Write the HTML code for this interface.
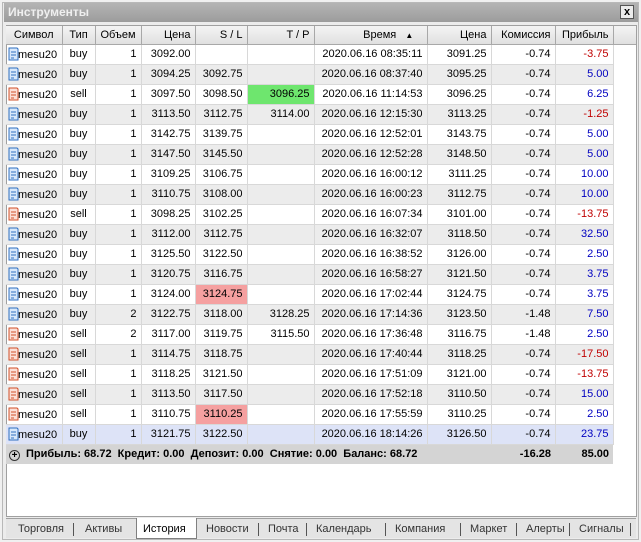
<!DOCTYPE html>
<html><head><meta charset="utf-8">
<style>
*{margin:0;padding:0;box-sizing:border-box}
body{width:641px;height:542px;background:#f0f0f0;font-family:"Liberation Sans",sans-serif;font-size:11px;color:#000;position:relative;overflow:hidden}
.frame{position:absolute;left:2px;top:2px;width:637px;height:538px;border:1px solid #b8b8b8;background:#ececec}
.title{position:absolute;left:4px;top:3px;width:634px;height:19px;background:linear-gradient(#b4b4b4,#9c9c9c);color:#efefef;font-weight:bold;font-size:12px;line-height:19px;padding-left:4px}
.close{position:absolute;right:4px;top:2px;width:14px;height:14px;background:#ececec;border:1px solid #555;color:#000;font-size:11px;line-height:12px;text-align:center;font-weight:bold}
.area{position:absolute;left:6px;top:25px;width:631px;height:492px;background:#fff;border:1px solid #a0a0a0}
table{position:absolute;left:6px;top:26px;border-collapse:collapse;table-layout:fixed;width:630px}
td,th{height:20px;padding:0 4px;white-space:nowrap;overflow:hidden;border-right:1px solid #d8d8d8;border-bottom:1px solid #d8d8d8;text-align:right;font-weight:normal}
th{height:18px;background:linear-gradient(#f4f4f4,#e0e0e0);border-right:1px solid #a8a8a8;border-bottom:1px solid #a8a8a8;text-align:right}
tr.e td{background:#ececec}
tr.s td{background:#dde3f7}
td.c,th.c{text-align:center}
td.sym{text-align:left;padding:0 0 0 2px}
.r{color:#c00000}.b{color:#0000c0}
.g{background:#6ee66e!important}.p{background:#f5a0a0!important}
tr.t td{background:#d4d4d4;font-weight:bold;border:none;height:20px}
svg{vertical-align:-3px;margin-right:-1px}
.tabs{position:absolute;left:6px;top:518px;width:630px;height:20px;background:#e4e4e4;border-top:1px solid #a0a0a0;font-size:11px;color:#333}
.tabs span{position:absolute;top:4px;line-height:12px}
.tabs i{position:absolute;top:4px;width:1px;height:13px;background:#555}
.tabs .a{position:absolute;left:130px;top:-1px;width:61px;height:21px;background:#fff;border:1px solid #808080;border-top:none}
</style></head><body>
<div class="frame"></div>
<div class="title">Инструменты<div class="close">x</div></div>
<div class="area"></div>
<svg width="0" height="0" style="position:absolute"><defs>
<symbol id="bi" viewBox="0 0 11 14"><path d="M1 1h8l1 1v11H1z" fill="#d8e8fa" stroke="#2f6fc0"/><path d="M3 5h5M3 8h5M3 11h3" stroke="#2f6fc0"/></symbol>
<symbol id="si" viewBox="0 0 11 14"><path d="M1 1h8l1 1v11H1z" fill="#fbe0d8" stroke="#d0502a"/><path d="M3 5h5M3 8h5M3 11h3" stroke="#d0502a"/></symbol>
</defs></svg>
<table>
<colgroup><col style="width:56px"><col style="width:33px"><col style="width:46px"><col style="width:54px"><col style="width:52px"><col style="width:67px"><col style="width:113px"><col style="width:64px"><col style="width:64px"><col style="width:58px"><col style="width:23px"></colgroup>
<tr><th class="c">Символ</th><th class="c">Тип</th><th class="c">Объем</th><th>Цена</th><th>S / L</th><th>T / P</th><th>Время &nbsp;&nbsp;<span style="font-size:8px">&#9650;</span>&nbsp;&nbsp;&nbsp;</th><th>Цена</th><th>Комиссия</th><th>Прибыль</th><th style="border-right:none"></th></tr>
<tr><td class="sym"><svg width="11" height="14"><use href="#bi"/></svg>mesu20</td><td class="c">buy</td><td>1</td><td>3092.00</td><td></td><td></td><td>2020.06.16 08:35:11</td><td>3091.25</td><td>-0.74</td><td class="r">-3.75</td><td style="border:none"></td></tr>
<tr class="e"><td class="sym"><svg width="11" height="14"><use href="#bi"/></svg>mesu20</td><td class="c">buy</td><td>1</td><td>3094.25</td><td>3092.75</td><td></td><td>2020.06.16 08:37:40</td><td>3095.25</td><td>-0.74</td><td class="b">5.00</td><td style="border:none;background:#fff"></td></tr>
<tr><td class="sym"><svg width="11" height="14"><use href="#si"/></svg>mesu20</td><td class="c">sell</td><td>1</td><td>3097.50</td><td>3098.50</td><td class="g">3096.25</td><td>2020.06.16 11:14:53</td><td>3096.25</td><td>-0.74</td><td class="b">6.25</td><td style="border:none"></td></tr>
<tr class="e"><td class="sym"><svg width="11" height="14"><use href="#bi"/></svg>mesu20</td><td class="c">buy</td><td>1</td><td>3113.50</td><td>3112.75</td><td>3114.00</td><td>2020.06.16 12:15:30</td><td>3113.25</td><td>-0.74</td><td class="r">-1.25</td><td style="border:none;background:#fff"></td></tr>
<tr><td class="sym"><svg width="11" height="14"><use href="#bi"/></svg>mesu20</td><td class="c">buy</td><td>1</td><td>3142.75</td><td>3139.75</td><td></td><td>2020.06.16 12:52:01</td><td>3143.75</td><td>-0.74</td><td class="b">5.00</td><td style="border:none"></td></tr>
<tr class="e"><td class="sym"><svg width="11" height="14"><use href="#bi"/></svg>mesu20</td><td class="c">buy</td><td>1</td><td>3147.50</td><td>3145.50</td><td></td><td>2020.06.16 12:52:28</td><td>3148.50</td><td>-0.74</td><td class="b">5.00</td><td style="border:none;background:#fff"></td></tr>
<tr><td class="sym"><svg width="11" height="14"><use href="#bi"/></svg>mesu20</td><td class="c">buy</td><td>1</td><td>3109.25</td><td>3106.75</td><td></td><td>2020.06.16 16:00:12</td><td>3111.25</td><td>-0.74</td><td class="b">10.00</td><td style="border:none"></td></tr>
<tr class="e"><td class="sym"><svg width="11" height="14"><use href="#bi"/></svg>mesu20</td><td class="c">buy</td><td>1</td><td>3110.75</td><td>3108.00</td><td></td><td>2020.06.16 16:00:23</td><td>3112.75</td><td>-0.74</td><td class="b">10.00</td><td style="border:none;background:#fff"></td></tr>
<tr><td class="sym"><svg width="11" height="14"><use href="#si"/></svg>mesu20</td><td class="c">sell</td><td>1</td><td>3098.25</td><td>3102.25</td><td></td><td>2020.06.16 16:07:34</td><td>3101.00</td><td>-0.74</td><td class="r">-13.75</td><td style="border:none"></td></tr>
<tr class="e"><td class="sym"><svg width="11" height="14"><use href="#bi"/></svg>mesu20</td><td class="c">buy</td><td>1</td><td>3112.00</td><td>3112.75</td><td></td><td>2020.06.16 16:32:07</td><td>3118.50</td><td>-0.74</td><td class="b">32.50</td><td style="border:none;background:#fff"></td></tr>
<tr><td class="sym"><svg width="11" height="14"><use href="#bi"/></svg>mesu20</td><td class="c">buy</td><td>1</td><td>3125.50</td><td>3122.50</td><td></td><td>2020.06.16 16:38:52</td><td>3126.00</td><td>-0.74</td><td class="b">2.50</td><td style="border:none"></td></tr>
<tr class="e"><td class="sym"><svg width="11" height="14"><use href="#bi"/></svg>mesu20</td><td class="c">buy</td><td>1</td><td>3120.75</td><td>3116.75</td><td></td><td>2020.06.16 16:58:27</td><td>3121.50</td><td>-0.74</td><td class="b">3.75</td><td style="border:none;background:#fff"></td></tr>
<tr><td class="sym"><svg width="11" height="14"><use href="#bi"/></svg>mesu20</td><td class="c">buy</td><td>1</td><td>3124.00</td><td class="p">3124.75</td><td></td><td>2020.06.16 17:02:44</td><td>3124.75</td><td>-0.74</td><td class="b">3.75</td><td style="border:none"></td></tr>
<tr class="e"><td class="sym"><svg width="11" height="14"><use href="#bi"/></svg>mesu20</td><td class="c">buy</td><td>2</td><td>3122.75</td><td>3118.00</td><td>3128.25</td><td>2020.06.16 17:14:36</td><td>3123.50</td><td>-1.48</td><td class="b">7.50</td><td style="border:none;background:#fff"></td></tr>
<tr><td class="sym"><svg width="11" height="14"><use href="#si"/></svg>mesu20</td><td class="c">sell</td><td>2</td><td>3117.00</td><td>3119.75</td><td>3115.50</td><td>2020.06.16 17:36:48</td><td>3116.75</td><td>-1.48</td><td class="b">2.50</td><td style="border:none"></td></tr>
<tr class="e"><td class="sym"><svg width="11" height="14"><use href="#si"/></svg>mesu20</td><td class="c">sell</td><td>1</td><td>3114.75</td><td>3118.75</td><td></td><td>2020.06.16 17:40:44</td><td>3118.25</td><td>-0.74</td><td class="r">-17.50</td><td style="border:none;background:#fff"></td></tr>
<tr><td class="sym"><svg width="11" height="14"><use href="#si"/></svg>mesu20</td><td class="c">sell</td><td>1</td><td>3118.25</td><td>3121.50</td><td></td><td>2020.06.16 17:51:09</td><td>3121.00</td><td>-0.74</td><td class="r">-13.75</td><td style="border:none"></td></tr>
<tr class="e"><td class="sym"><svg width="11" height="14"><use href="#si"/></svg>mesu20</td><td class="c">sell</td><td>1</td><td>3113.50</td><td>3117.50</td><td></td><td>2020.06.16 17:52:18</td><td>3110.50</td><td>-0.74</td><td class="b">15.00</td><td style="border:none;background:#fff"></td></tr>
<tr><td class="sym"><svg width="11" height="14"><use href="#si"/></svg>mesu20</td><td class="c">sell</td><td>1</td><td>3110.75</td><td class="p">3110.25</td><td></td><td>2020.06.16 17:55:59</td><td>3110.25</td><td>-0.74</td><td class="b">2.50</td><td style="border:none"></td></tr>
<tr class="s"><td class="sym"><svg width="11" height="14"><use href="#bi"/></svg>mesu20</td><td class="c">buy</td><td>1</td><td>3121.75</td><td>3122.50</td><td></td><td>2020.06.16 18:14:26</td><td>3126.50</td><td>-0.74</td><td class="b">23.75</td><td style="border:none;background:#fff"></td></tr>
<tr class="t"><td colspan="8" style="text-align:left;padding-left:3px"><span style="display:inline-block;width:11px;height:11px;border:1px solid #333;border-radius:50%;text-align:center;line-height:9px;font-size:10px;vertical-align:-1px;margin-right:6px">+</span>Прибыль: 68.72&nbsp; Кредит: 0.00&nbsp; Депозит: 0.00&nbsp; Снятие: 0.00&nbsp; Баланс: 68.72</td><td>-16.28</td><td>85.00</td><td style="background:#fff"></td></tr>
</table>
<div class="tabs">
<div class="a"></div>
<span style="left:12px">Торговля</span><i style="left:67px"></i>
<span style="left:79px">Активы</span>
<span style="left:137px;color:#000">История</span>
<span style="left:200px">Новости</span><i style="left:252px"></i>
<span style="left:262px">Почта</span><i style="left:300px"></i>
<span style="left:310px">Календарь</span><i style="left:379px"></i>
<span style="left:389px">Компания</span><i style="left:454px"></i>
<span style="left:464px">Маркет</span><i style="left:510px"></i>
<span style="left:520px">Алерты</span><i style="left:563px"></i>
<span style="left:573px">Сигналы</span><i style="left:624px"></i>
</div>
</body></html>
